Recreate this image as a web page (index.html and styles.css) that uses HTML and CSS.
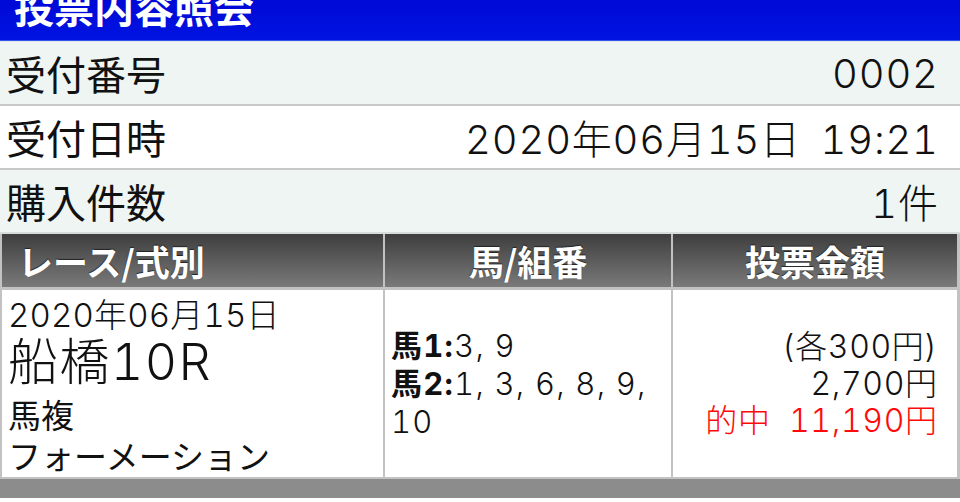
FILE: index.html
```html
<!DOCTYPE html>
<html lang="ja">
<head>
<meta charset="utf-8">
<title>投票内容照会</title>
<link rel="stylesheet" href="styles.css">
</head>
<body>
<header class="titlebar"><h1 class="title">投票内容照会</h1></header>
<div class="info-row alt"><span class="label">受付番号</span><span class="value">0002</span></div>
<div class="info-row"><span class="label">受付日時</span><span class="value">2020年06月15日&nbsp;&thinsp;19:21</span></div>
<div class="info-row alt last"><span class="label">購入件数</span><span class="value">1件</span></div>
<div class="bets">
  <div class="th th-left">レース/式別</div>
  <div class="th">馬/組番</div>
  <div class="th">投票金額</div>
  <div class="td race">
    <div class="race-date">2020年06月15日</div>
    <div class="race-name">船橋10R</div>
    <div class="race-type">馬複</div>
    <div class="race-method">フォーメーション</div>
  </div>
  <div class="td combo">
    <div class="combo-text"><b>馬1:</b>3, 9<br><b>馬2:</b>1, 3, 6, 8, 9,<br>10</div>
  </div>
  <div class="td amount">
    <div class="amount-text">(各300円)<br>2,700円<br><span class="hit">的中&nbsp;&nbsp;11,190円</span></div>
  </div>
</div>
<div class="footer-bar"></div>
</body>
</html>
```
FILE: styles.css
```css
html, body {
  margin: 0;
  padding: 0;
  background: #ffffff;
}
body {
  width: 960px;
  height: 502px;
  overflow: hidden;
  font-family: Inter, "Noto Sans CJK JP", sans-serif;
  font-variant-numeric: tabular-nums;
  color: #111111;
}
.titlebar {
  height: 40px;
  overflow: hidden;
  background: linear-gradient(#0008d6, #0014e2);
  border-bottom: 1px solid #3554ee;
  box-shadow: 0 1px 0 #dfe7ee;
  margin-bottom: 1px;
}
.title {
  margin: -14px 0 0 14px;
  font-size: 40px;
  line-height: 40px;
  font-weight: 700;
  color: #ffffff;
  font-family: "Noto Sans CJK JP", sans-serif;
}
.info-row {
  height: 62px;
  display: flex;
  align-items: center;
  justify-content: space-between;
  padding: 0 22px 0 6px;
  border-bottom: 2px solid #c8cac9;
  background: #ffffff;
  font-size: 40px;
  font-weight: 300;
}
.info-row.alt {
  background: #eef5f3;
}
.info-row.last {
  border-bottom-color: #d6dedc;
}
.label {
  font-family: "Noto Sans CJK JP", sans-serif;
  font-weight: 400;
}
.value {
  letter-spacing: 0.02em;
  margin-right: -0.02em;
}
.bets {
  display: grid;
  grid-template-columns: 381px 286px 284px;
  grid-template-rows: 53px 187px;
  column-gap: 2px;
  row-gap: 3px;
  padding: 0 3px 2px 2px;
  background: #c2c2c2;
}
.th {
  display: flex;
  align-items: center;
  justify-content: center;
  background: linear-gradient(#3e3e3e, #7a7a7a);
  color: #ffffff;
  font-family: "Noto Sans CJK JP", sans-serif;
  font-weight: 700;
  font-size: 35px;
  text-shadow: 0 -1px 1px #222;
}
.th-left {
  justify-content: flex-start;
  padding-left: 16px;
}
.td {
  background: #ffffff;
  font-size: 32px;
  font-weight: 300;
}
.race {
  padding: 7px 0 0 6px;
}
.race-date { line-height: 36px; font-size: 33px; letter-spacing: 0.005em; }
.race-name { line-height: 58px; font-size: 50px; letter-spacing: 0.03em; }
.race-type { line-height: 46px; font-size: 33px; font-family: "Noto Sans CJK JP", sans-serif; font-weight: 400; }
.race-method { line-height: 36px; font-size: 33px; font-family: "Noto Sans CJK JP", sans-serif; font-weight: 400; }
.combo {
  display: flex;
  align-items: center;
  padding-left: 6px;
}
.combo-text {
  font-size: 31px;
  line-height: 38px;
  letter-spacing: 0.04em;
}
.combo-text b {
  font-weight: 700;
}
.amount {
  display: flex;
  align-items: center;
  justify-content: flex-end;
  padding-right: 20px;
}
.amount-text {
  text-align: right;
  font-size: 32px;
  line-height: 37px;
  letter-spacing: 0.02em;
  margin-right: -0.02em;
}
.hit {
  color: #ff0a0a;
}
.footer-bar {
  height: 19px;
  background: #8c8c8c;
}
```
